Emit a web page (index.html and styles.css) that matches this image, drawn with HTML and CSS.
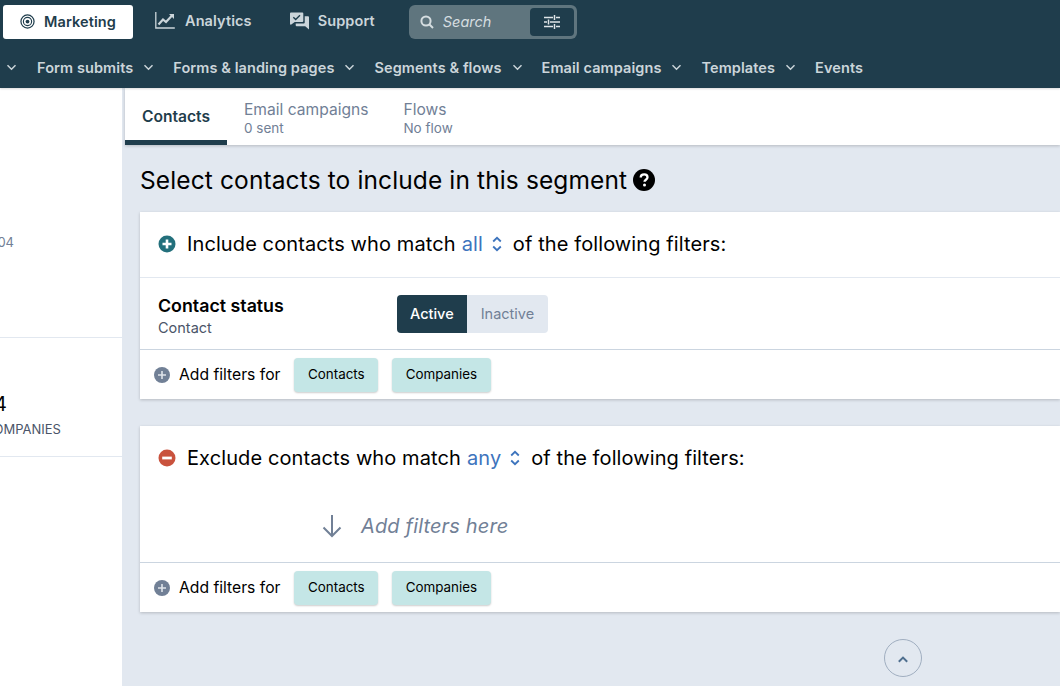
FILE: index.html

```html
<!DOCTYPE html>
<html lang="en">
<head>
    <meta charset="UTF-8">
    <meta name="viewport" content="width=device-width, initial-scale=1.0">
    <title>Segment</title>
    <link rel="stylesheet" href="styles.css">
</head>
<body>
    <header class="topbar">
        <div class="main-nav">
            <a class="main-link active">
                <svg class="main-icon target" viewBox="0 0 16 16" fill="none" stroke="currentColor">
                    <circle cx="8" cy="8" r="7" stroke-width="1.3"/>
                    <circle cx="8" cy="8" r="4.4" stroke-width="1.2"/>
                    <circle cx="8" cy="8" r="2" fill="currentColor" stroke="none"/>
                </svg>
                Marketing
            </a>
            <a class="main-link">
                <svg class="main-icon chart" viewBox="0 0 20 17" fill="none" stroke="currentColor">
                    <path d="M.8 0v16h19" stroke-width="1.3"/>
                    <path d="M3.5 12.5l4.5-5 3 2.5 6-6.5" stroke-width="2.2"/>
                    <path d="M14 2h5v5z" fill="currentColor" stroke="none"/>
                </svg>
                Analytics
            </a>
            <a class="main-link">
                <svg class="main-icon chat" viewBox="0 0 20 18" fill="currentColor">
                    <path d="M1 0h12a1 1 0 0 1 1 1v8a1 1 0 0 1-1 1H5l-4 3a1 1 0 0 1-1-1V1a1 1 0 0 1 1-1z"/>
                    <path d="M15.5 4H19a1 1 0 0 1 1 1v13l-4-3.5H7a1 1 0 0 1-1-1V11.5h8.5a1 1 0 0 0 1-1z"/>
                    <path d="M3.500 5l2.500 2.500L10.500 3" fill="none" stroke="#1f3d4c" stroke-width="1.4"/>
                </svg>
                Support
            </a>
            <div class="search">
                <svg class="search-icon" viewBox="0 0 14 14" fill="none" stroke="currentColor" stroke-width="2">
                    <circle cx="6" cy="6" r="4.6"/>
                    <path d="M9.500 9.500L13 13"/>
                </svg>
                <span class="search-text">Search</span>
                <button class="search-btn" type="button">
                    <svg viewBox="0 0 16 14" width="16" height="14" fill="none" stroke="currentColor" stroke-width="1.5">
                        <path d="M0 2.500h9M12 2.500h4M10.500 0v5M0 7h3M6 7h10M4.500 4.500v5M0 11.500h9M12 11.500h4M10.500 9v5"/>
                    </svg>
                </button>
            </div>
        </div>
        <nav class="sub-nav">
            <svg class="chev first" viewBox="0 0 11 7" fill="none" stroke="currentColor" stroke-width="1.5"><path d="M1.500 1.200l4 4 4-4"/></svg>
            <a>Form submits</a>
            <svg class="chev" viewBox="0 0 11 7" fill="none" stroke="currentColor" stroke-width="1.5"><path d="M1.500 1.200l4 4 4-4"/></svg>
            <a>Forms &amp; landing pages</a>
            <svg class="chev" viewBox="0 0 11 7" fill="none" stroke="currentColor" stroke-width="1.5"><path d="M1.500 1.200l4 4 4-4"/></svg>
            <a>Segments &amp; flows</a>
            <svg class="chev" viewBox="0 0 11 7" fill="none" stroke="currentColor" stroke-width="1.5"><path d="M1.500 1.200l4 4 4-4"/></svg>
            <a>Email campaigns</a>
            <svg class="chev" viewBox="0 0 11 7" fill="none" stroke="currentColor" stroke-width="1.5"><path d="M1.500 1.200l4 4 4-4"/></svg>
            <a>Templates</a>
            <svg class="chev" viewBox="0 0 11 7" fill="none" stroke="currentColor" stroke-width="1.5"><path d="M1.500 1.200l4 4 4-4"/></svg>
            <a>Events</a>
        </nav>
    </header>

    <div class="layout">
        <aside class="sidebar">
            <div class="side-block top">
                <div class="side-date">2004</div>
            </div>
            <div class="side-block stats">
                <div class="side-count">4</div>
                <div class="side-label">COMPANIES</div>
            </div>
        </aside>

        <main class="content">
            <div class="tabs">
                <a class="tab active">Contacts</a>
                <a class="tab">Email campaigns<small>0 sent</small></a>
                <a class="tab">Flows<small>No flow</small></a>
            </div>

            <div class="panel">
                <h1 class="title">Select contacts to include in this segment
                    <svg class="help" viewBox="0 0 22 22">
                        <circle cx="11" cy="11" r="11" fill="#000"/>
                        <path d="M7.700 8.600c0-2 1.500-3.300 3.500-3.300 1.900 0 3.300 1.200 3.300 2.900 0 2.500-3 2.500-3 4.600" fill="none" stroke="#fff" stroke-width="2.3"/>
                        <circle cx="11.500" cy="16" r="1.5" fill="#fff"/>
                    </svg>
                </h1>

                <section class="card">
                    <div class="card-head">
                        <svg class="sign" viewBox="0 0 18 18">
                            <circle cx="9" cy="9" r="8.5" fill="#23707c"/>
                            <path d="M9 4.500v9M4.500 9h9" stroke="#fff" stroke-width="2.6"/>
                        </svg>
                        <span>Include contacts who match</span>
                        <a class="match">all</a>
                        <svg class="updown" viewBox="0 0 10 16" fill="none" stroke="currentColor" stroke-width="1.8"><path d="M1.200 5.500L5 1.800l3.800 3.700M1.200 10.500L5 14.200l3.800-3.700"/></svg>
                        <span>of the following filters:</span>
                    </div>
                    <div class="filter-row">
                        <div class="filter-name">
                            <strong>Contact status</strong>
                            <span>Contact</span>
                        </div>
                        <div class="toggle">
                            <span class="toggle-item on">Active</span>
                            <span class="toggle-item">Inactive</span>
                        </div>
                    </div>
                    <div class="card-foot">
                        <svg class="add" viewBox="0 0 16 16">
                            <circle cx="8" cy="8" r="8" fill="#718096"/>
                            <path d="M8 4v8M4 8h8" stroke="#dfe4ea" stroke-width="1.6"/>
                        </svg>
                        <span class="add-text">Add filters for</span>
                        <button class="chip" type="button">Contacts</button>
                        <button class="chip" type="button">Companies</button>
                    </div>
                </section>

                <section class="card">
                    <div class="card-head">
                        <svg class="sign" viewBox="0 0 18 18">
                            <circle cx="9" cy="9" r="8.5" fill="#c9523d"/>
                            <path d="M4.200 9h9.600" stroke="#fff" stroke-width="2.8"/>
                        </svg>
                        <span>Exclude contacts who match</span>
                        <a class="match">any</a>
                        <svg class="updown" viewBox="0 0 10 16" fill="none" stroke="currentColor" stroke-width="1.8"><path d="M1.200 5.500L5 1.800l3.800 3.700M1.200 10.500L5 14.200l3.800-3.700"/></svg>
                        <span>of the following filters:</span>
                    </div>
                    <div class="empty-row">
                        <svg class="arrow" viewBox="0 0 20 24" fill="none" stroke="currentColor" stroke-width="2"><path d="M10 1v21M1.500 13.500L10 22l8.500-8.500"/></svg>
                        <em>Add filters here</em>
                    </div>
                    <div class="card-foot">
                        <svg class="add" viewBox="0 0 16 16">
                            <circle cx="8" cy="8" r="8" fill="#718096"/>
                            <path d="M8 4v8M4 8h8" stroke="#dfe4ea" stroke-width="1.6"/>
                        </svg>
                        <span class="add-text">Add filters for</span>
                        <button class="chip" type="button">Contacts</button>
                        <button class="chip" type="button">Companies</button>
                    </div>
                </section>

                <button class="collapse" type="button">
                    <svg viewBox="0 0 10 7" width="10" height="7" fill="none" stroke="currentColor" stroke-width="2"><path d="M.8 5.800L5 1.600l4.200 4.200"/></svg>
                </button>
            </div>
        </main>
    </div>
</body>
</html>
```

FILE: styles.css

```css
* {
    box-sizing: border-box;
}
body {
    margin: 0;
    height: 686px;
    overflow: hidden;
    font-family: Inter, "Noto Sans", sans-serif;
    color: #000;
    background-color: #e2e8f0;
    display: flex;
    flex-direction: column;
}

/* top bar */
.topbar {
    height: 88px;
    flex: none;
    background-color: #1f3d4c;
    color: #cbd5da;
    position: relative;
    z-index: 2;
    box-shadow: 0 1px 2px rgba(0,0,0,0.15);
}
.main-nav {
    height: 47px;
    padding: 5px 0 0 3px;
    display: flex;
    align-items: flex-start;
}
.main-link {
    height: 34px;
    padding-bottom: 3px;
    display: flex;
    align-items: center;
    font-size: 14.5px;
    font-weight: 600;
    letter-spacing: 0.1px;
    margin-left: 22px;
}
.main-link.active {
    width: 130px;
    margin-left: 0;
    padding-left: 17px;
    padding-bottom: 2px;
    background: white;
    color: #1f3d4c;
    border-radius: 3px;
}
.main-icon {
    flex: none;
}
.target {
    width: 15px;
    height: 15px;
    margin-right: 9px;
}
.chart {
    width: 20px;
    height: 17px;
    margin-right: 10px;
}
.chat {
    width: 19px;
    height: 18px;
    margin-right: 9px;
    margin-left: 16px;
}
.search {
    width: 168px;
    height: 34px;
    margin-left: 34px;
    padding-left: 11px;
    display: flex;
    align-items: center;
    background-color: #5f757e;
    border-radius: 6px;
    color: #d5dde0;
}
.search-icon {
    width: 14px;
    height: 14px;
    margin-right: 9px;
}
.search-text {
    font-size: 14.5px;
    font-style: italic;
    position: relative;
    top: -1px;
}
.search-btn {
    width: 44px;
    height: 28px;
    margin-left: auto;
    margin-right: 3px;
    padding: 0;
    border: none;
    border-radius: 4px;
    background-color: #1f3d4c;
    color: #dfe5e8;
    display: flex;
    align-items: center;
    justify-content: center;
}
.sub-nav {
    height: 41px;
    display: flex;
    align-items: center;
    font-size: 14.5px;
    font-weight: 600;
    letter-spacing: 0.09px;
}
.chev {
    width: 11px;
    height: 7px;
    margin: 0 19px 0 10px;
    flex: none;
}
.chev.first {
    margin-left: 6px;
    margin-right: 20px;
}

/* page body */
.layout {
    flex: 1;
    display: flex;
    min-height: 0;
}
.sidebar {
    width: 122px;
    flex: none;
    background: white;
    overflow: hidden;
}
.side-block {
    margin-left: -60px;
    border-bottom: 1px solid #e2e8f0;
    font-size: 13px;
    color: #718096;
}
.side-block.top {
    height: 250px;
    padding: 146px 108px 0 0;
    text-align: right;
}
.stats {
    height: 119px;
    padding: 54px 0 0 0;
}
.side-count {
    font-size: 20px;
    color: #000;
    padding-left: 54px;
}
.side-label {
    margin-top: 5px;
    padding-left: 44px;
    color: #4a5568;
}
.content {
    flex: 1;
    min-width: 0;
    margin-left: 3px;
}
.tabs {
    height: 57px;
    display: flex;
    background: white;
    box-shadow: 0 1px 3px rgba(0,0,0,0.2);
    color: #718096;
    font-size: 15.6px;
}
.tab {
    padding: 12px 0 0;
    margin-right: 35px;
    line-height: 20px;
}
.tab:nth-child(2) {
    margin-left: 17px;
}
.tab small {
    display: block;
    font-size: 13.5px;
    line-height: 17px;
}
.tab.active {
    width: 102px;
    padding: 19px 0 0;
    margin-right: 0;
    text-align: center;
    font-weight: 600;
    color: #1f3d4c;
    border-bottom: 5px solid #1f3d4c;
}

.panel {
    padding: 0 0 0 15px;
}
.title {
    margin: 0;
    height: 67px;
    padding-top: 18px;
    display: flex;
    align-items: flex-start;
    font-size: 24.5px;
    font-weight: 400;
    letter-spacing: 0.12px;
    line-height: 34px;
    white-space: nowrap;
}
.help {
    width: 22px;
    height: 22px;
    margin: 6px 0 0 6px;
}
.card {
    background: white;
    margin-bottom: 27px;
    box-shadow: 0 1px 3px rgba(0,0,0,0.2);
}
.card-head {
    height: 65px;
    padding: 0 0 2px 18px;
    display: flex;
    align-items: center;
    font-size: 20px;
    letter-spacing: 0.1px;
    white-space: pre;
}
.sign {
    width: 18px;
    height: 18px;
    margin-right: 11px;
}
.match {
    margin-left: 6px;
    color: #3d74bd;
}
.updown {
    width: 10px;
    height: 16px;
    margin: 0 11px 0 9px;
    color: #3d74bd;
}
.filter-row {
    height: 73px;
    padding-left: 18px;
    display: flex;
    align-items: center;
    border-top: 1px solid #e2e8f0;
    border-bottom: 1px solid #cbd5e0;
}
.filter-name {
    width: 239px;
    margin-top: 6px;
}
.filter-name strong {
    display: block;
    font-size: 17.8px;
    font-weight: 600;
    line-height: 22px;
}
.filter-name span {
    display: block;
    font-size: 14.5px;
    line-height: 22px;
    color: #4a5568;
}
.toggle {
    display: flex;
    font-size: 14.5px;
}
.toggle-item {
    padding: 0 14px;
    height: 38px;
    line-height: 38px;
    background-color: #e2e8f0;
    color: #718096;
    border-radius: 0 4px 4px 0;
}
.toggle-item.on {
    padding: 0 13px;
    background-color: #1f3d4c;
    color: white;
    font-weight: 500;
    border-radius: 4px 0 0 4px;
}
.card-foot {
    height: 49px;
    padding-left: 14px;
    display: flex;
    align-items: center;
}
.add {
    width: 16px;
    height: 16px;
    margin-right: 9px;
}
.add-text {
    font-size: 15.7px;
    margin-right: 14px;
}
.chip {
    height: 34px;
    padding: 0 13.5px 2px;
    margin-right: 14px;
    border: none;
    border-radius: 4px;
    background-color: #c4e6e6;
    box-shadow: 0 1px 2px rgba(0,0,0,0.2);
    font-family: inherit;
    font-size: 13.4px;
    color: #000;
}
.empty-row {
    height: 72px;
    padding: 0 0 2px 182px;
    display: flex;
    align-items: center;
    color: #718096;
    border-bottom: 1px solid #cbd5e0;
}
.arrow {
    width: 20px;
    height: 24px;
    margin-right: 19px;
}
.empty-row em {
    font-size: 20px;
    letter-spacing: 0.15px;
}
.collapse {
    display: block;
    width: 38px;
    height: 38px;
    margin-left: 744px;
    padding: 0;
    border: 1px solid #a0aec0;
    border-radius: 50%;
    background: transparent;
    color: #4f6f8f;
}
```
